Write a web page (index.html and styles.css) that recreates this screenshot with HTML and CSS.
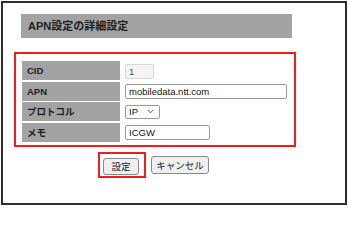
FILE: index.html
```html
<!DOCTYPE html>
<html lang="ja">
<head>
<meta charset="utf-8">
<link rel="stylesheet" href="styles.css">
</head>
<body>
<div class="frame">
  <div class="title">APN設定の詳細設定</div>
  <div class="form-box">
    <div class="row">
      <div class="label">CID</div>
      <div class="field"><span class="input input-cid disabled">1</span></div>
    </div>
    <div class="row">
      <div class="label">APN</div>
      <div class="field"><span class="input input-apn">mobiledata.ntt.com</span></div>
    </div>
    <div class="row">
      <div class="label">プロトコル</div>
      <div class="field">
        <span class="input select">IP
          <svg class="chev" width="7" height="5" viewBox="0 0 7 5"><path d="M0.8 1 L3.5 3.8 L6.2 1" fill="none" stroke="#555" stroke-width="0.9"/></svg>
        </span>
      </div>
    </div>
    <div class="row">
      <div class="label">メモ</div>
      <div class="field"><span class="input input-memo">ICGW</span></div>
    </div>
  </div>
  <div class="buttons">
    <div class="highlight"><span class="btn btn-set">設定</span></div>
    <span class="btn btn-cancel">キャンセル</span>
  </div>
</div>
</body>
</html>
```

FILE: styles.css
```css
html, body {
  margin: 0;
  padding: 0;
  background: #fff;
}
body {
  font-family: "Liberation Sans", "Noto Sans CJK JP", sans-serif;
  color: #222;
}
.frame {
  margin: 1px;
  width: 342px;
  height: 200px;
  border: 2px solid #2e2e2e;
  box-sizing: content-box;
  display: flex;
  flex-direction: column;
  align-items: flex-start;
}
.title {
  margin: 11px 0 0 18px;
  width: 264px;
  height: 24px;
  padding-left: 7px;
  background: #a3a3a3;
  font-weight: bold;
  font-size: 11px;
  line-height: 24px;
  color: #1e1e1e;
}
.form-box {
  margin: 14px 0 0 11px;
  width: 272px;
  height: 84px;
  border: 2px solid #f21c1c;
  padding: 7px 0 0 6px;
  box-sizing: content-box;
  display: flex;
  flex-direction: column;
  gap: 1.5px;
}
.row {
  display: flex;
  height: 19px;
  flex-shrink: 0;
  gap: 5px;
}
.label {
  width: 93px;
  padding-left: 5px;
  background: #a3a3a3;
  font-weight: bold;
  font-size: 9.5px;
  line-height: 19px;
  color: #1e1e1e;
}
.field {
  display: flex;
  align-items: center;
}
.input {
  display: inline-flex;
  align-items: center;
  box-sizing: border-box;
  height: 15px;
  border: 1px solid #9a9a9a;
  border-radius: 2px;
  padding-left: 3px;
  font-size: 9.5px;
  background: #fff;
  color: #111;
}
.disabled {
  background: #f4f4f4;
  border-color: #d8d8d8;
  color: #555;
  margin-top: 1px;
}
.input-cid { width: 29px; }
.input-apn { width: 162px; }
.input-memo { width: 85px; }
.select {
  width: 35px;
  height: 14px;
  justify-content: space-between;
  padding-right: 5px;
}
.chev { display: block; }
.buttons {
  margin: 5px 0 0 95px;
  display: flex;
  align-items: flex-start;
  gap: 5px;
}
.highlight {
  border: 2px solid #f21c1c;
  padding: 2px 5px 3px 3px;
  height: 17px;
  box-sizing: content-box;
}
.btn {
  display: inline-flex;
  align-items: center;
  justify-content: center;
  box-sizing: border-box;
  height: 17px;
  border: 1px solid #8a8a8a;
  border-radius: 3px;
  background: #efefef;
  font-size: 9.5px;
  color: #222;
}
.btn-set { width: 36px; }
.btn-cancel { width: 58px; margin-top: 4px; height: 18px; }
```
